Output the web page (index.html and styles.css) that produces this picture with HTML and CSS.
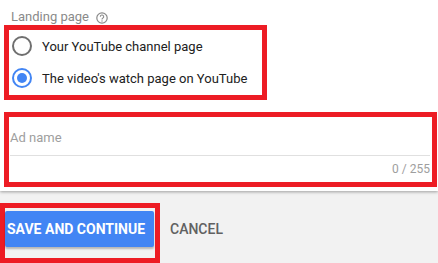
FILE: index.html
```html
<!DOCTYPE html>
<html>
<head>
<meta charset="utf-8">
<link rel="stylesheet" href="styles.css">
</head>
<body>
<div class="page">
  <section class="form">
    <div class="label">Landing page
      <svg class="help" width="12" height="12" viewBox="0 0 12 12"><circle cx="6" cy="6" r="5.2" fill="none" stroke="#8a8a8a" stroke-width="1.2"/><path d="M4.3 4.7a1.7 1.7 0 1 1 2.4 1.5c-.5.3-.7.6-.7 1.2" fill="none" stroke="#8a8a8a" stroke-width="1.1"/><circle cx="6" cy="9" r=".7" fill="#8a8a8a"/></svg>
    </div>
    <div class="mark radios">
      <div class="radio"><span class="dot"></span><span>Your YouTube channel page</span></div>
      <div class="radio checked"><span class="dot"></span><span>The video's watch page on YouTube</span></div>
    </div>
    <div class="mark field">
      <div class="placeholder">Ad name</div>
      <div class="line"></div>
      <div class="counter">0 / 255</div>
    </div>
  </section>
  <footer class="actions">
    <div class="mark btnwrap"><button class="primary">SAVE AND CONTINUE</button></div>
    <button class="flat">CANCEL</button>
  </footer>
</div>
</body>
</html>
```
FILE: styles.css
```css
* { box-sizing: border-box; }
html, body { margin: 0; padding: 0; }
body {
  width: 438px;
  height: 263px;
  overflow: hidden;
  font-family: Roboto, "Liberation Sans", sans-serif;
  background: #fff;
}
.page { display: flex; flex-direction: column; height: 263px; }
.form {
  height: 202px;
  padding-left: 4px;
  background: #fff;
  position: relative;
  z-index: 1;
  box-shadow: 0 1px 3px rgba(0,0,0,0.35);
}
.label {
  padding: 9px 0 0 7px;
  height: 25px;
  line-height: 16px;
  font-size: 13px;
  color: #8a8a8a;
  display: flex;
  align-items: center;
  gap: 7px;
  white-space: nowrap;
}
.help { display: block; margin-top: 1px; }
.mark { border: 5px solid #ed1c24; }
.radios {
  width: 263px;
  height: 75px;
  padding-left: 3px;
}
.radio {
  height: 32px;
  display: flex;
  align-items: center;
  gap: 10px;
  font-size: 13px;
  color: #212121;
  white-space: nowrap;
}
.dot {
  flex: none;
  width: 20px;
  height: 20px;
  border-radius: 50%;
  border: 2px solid #6f6f6f;
  display: flex;
  align-items: center;
  justify-content: center;
}
.checked .dot { border-color: #4285f4; }
.checked .dot::after {
  content: "";
  width: 10px;
  height: 10px;
  border-radius: 50%;
  background: #4285f4;
}
.field {
  margin-top: 12px;
  width: 433px;
  height: 75px;
  padding: 0 2px 0 1px;
  display: flex;
  flex-direction: column;
}
.placeholder {
  margin-top: 13px;
  height: 16px;
  line-height: 16px;
  font-size: 13px;
  color: #9e9e9e;
}
.line {
  margin-top: 9px;
  height: 1px;
  background: #e0e0e0;
}
.counter {
  margin-top: 6px;
  text-align: right;
  font-size: 12px;
  line-height: 14px;
  color: #9e9e9e;
}
.actions {
  flex: 1;
  background: #f2f2f2;
  padding-top: 12px;
  display: flex;
  align-items: flex-start;
}
.btnwrap {
  width: 160px;
  height: 60px;
  padding: 3px 1px 0 0;
}
.primary {
  width: 149px;
  height: 36px;
  border: 0;
  border-radius: 2px;
  background: #4285f4;
  color: #fff;
  font-family: Roboto, "Liberation Sans", sans-serif;
  font-weight: 700;
  font-size: 14px;
  text-align: left;
  padding: 0 0 0 2px;
  box-shadow: 0 2px 2px rgba(0,0,0,0.25);
}
.flat {
  margin: 8px 0 0 10px;
  height: 36px;
  border: 0;
  background: transparent;
  color: #616161;
  font-family: Roboto, "Liberation Sans", sans-serif;
  font-weight: 500;
  font-size: 14px;
  padding: 0;
}
```
